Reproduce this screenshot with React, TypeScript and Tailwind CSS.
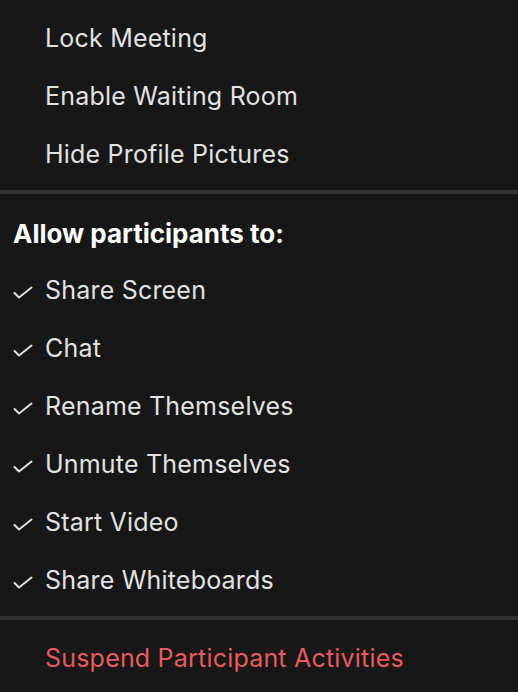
const topItems = ["Lock Meeting", "Enable Waiting Room", "Hide Profile Pictures"]

const allowItems = [
    "Share Screen",
    "Chat",
    "Rename Themselves",
    "Unmute Themselves",
    "Start Video",
    "Share Whiteboards",
]

function Divider() {
    return <div className="h-[4px] bg-[#313131] mt-[6px] mb-[10px]" />
}

function Tick() {
    return (
        <svg width="20" height="14" viewBox="0 0 20 14" className="ml-[13px] mt-[4px]">
            <polyline
                points="1.5,7 6,11.5 18.5,1.5"
                fill="none"
                stroke="currentColor"
                strokeWidth="2"
                strokeLinecap="round"
                strokeLinejoin="round"
            />
        </svg>
    )
}

export default function App() {
    return (
        <div
            className="w-[518px] h-[692px] bg-[#171717] text-[#e2e2e2] text-[25px] tracking-[0.2px] pt-[10px] overflow-hidden"
            style={{ fontFamily: "Inter, 'Noto Sans', sans-serif" }}
        >
            {topItems.map((item) => (
                <div key={item} className="h-[58px] flex items-center pl-[45px]">
                    {item}
                </div>
            ))}
            <Divider />
            <div className="h-[58px] flex items-center pl-[13px] font-bold text-white text-[26px] tracking-normal">
                Allow participants to:
            </div>
            {allowItems.map((item) => (
                <div key={item} className="h-[58px] flex items-center">
                    <div className="w-[45px] flex">
                        <Tick />
                    </div>
                    {item}
                </div>
            ))}
            <Divider />
            <div className="h-[58px] flex items-center pl-[45px] text-[#e85a5e]">
                Suspend Participant Activities
            </div>
        </div>
    )
}
